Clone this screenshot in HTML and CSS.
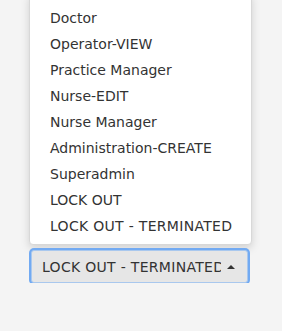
FILE: index.html
```html
<!DOCTYPE html>
<html lang="en">
<head>
    <meta charset="UTF-8">
    <title>Role select</title>
    <link rel="stylesheet" href="styles.css">
</head>
<body>
    <div class="dropup">
        <ul class="dropdown-menu">
            <li>Doctor</li>
            <li>Operator-VIEW</li>
            <li>Practice Manager</li>
            <li>Nurse-EDIT</li>
            <li>Nurse Manager</li>
            <li>Administration-CREATE</li>
            <li>Superadmin</li>
            <li>LOCK OUT</li>
            <li class="caps">LOCK OUT - TERMINATED</li>
        </ul>
        <button class="dropdown-toggle">
            <span class="label">LOCK OUT - TERMINATED</span>
            <span class="caret"></span>
        </button>
    </div>
</body>
</html>
```

FILE: styles.css
```css
body {
    font-family: 'DejaVu Sans', Verdana, sans-serif;
    background-color: #f4f4f4;
    color: #333;
    margin: 0;
    padding: 0;
    overflow: hidden;
}

.dropup {
    display: flex;
    flex-direction: column;
    align-items: flex-start;
    padding-left: 29px;
    margin-top: -6px;
}

.dropdown-menu {
    list-style: none;
    margin: 0;
    padding: 10px 0 5px;
    width: 223px;
    box-sizing: border-box;
    background: #fff;
    border: 1px solid #d8d8d8;
    border-radius: 4px;
    box-shadow: 0 3px 8px rgba(0, 0, 0, 0.15);
}

.dropdown-menu li {
    height: 26px;
    line-height: 26px;
    padding-left: 20px;
    font-size: 14px;
    white-space: nowrap;
}

.dropdown-menu .caps {
    letter-spacing: 0.3px;
}

.dropdown-toggle {
    margin: 5px 0 0 2px;
    width: 217px;
    height: 33px;
    display: flex;
    align-items: center;
    gap: 6px;
    padding: 0 12px 0 10px;
    box-sizing: border-box;
    background-color: #e6e6e6;
    border: 1px solid #a9c8ee;
    border-radius: 3px;
    box-shadow: 0 0 0 2px #72aaf2;
    font-family: inherit;
    font-size: 14px;
    color: #333;
    overflow: hidden;
}

.label {
    flex: 1 1 0;
    min-width: 0;
    overflow: hidden;
    white-space: nowrap;
    text-align: left;
    letter-spacing: 0.3px;
}

.caret {
    flex: none;
    width: 0;
    height: 0;
    border-left: 4px solid transparent;
    border-right: 4px solid transparent;
    border-bottom: 4px solid #333;
}
```
